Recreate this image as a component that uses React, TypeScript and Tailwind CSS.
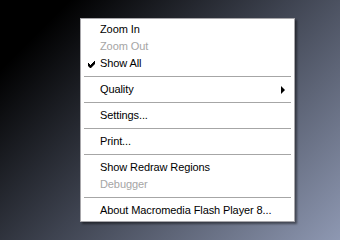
type Item = { label: string; disabled?: boolean; checked?: boolean; submenu?: boolean } | 'sep';

const items: Item[] = [
  { label: 'Zoom In' },
  { label: 'Zoom Out', disabled: true },
  { label: 'Show All', checked: true },
  'sep',
  { label: 'Quality', submenu: true },
  'sep',
  { label: 'Settings...' },
  'sep',
  { label: 'Print...' },
  'sep',
  { label: 'Show Redraw Regions' },
  { label: 'Debugger', disabled: true },
  'sep',
  { label: 'About Macromedia Flash Player 8...' },
];

export default function App() {
  return (
    <div className="w-[340px] h-[240px] overflow-hidden bg-[linear-gradient(135deg,#000_12%,#3e4350_50%,#8e98b2_100%)] pt-[18px] pl-[80px]">
      <div className="w-[215px] bg-white border border-[#a7a6aa] py-[2px] shadow-[2px_2px_2px_rgba(0,0,0,0.45)] font-['Liberation_Sans',sans-serif] text-[11px] tracking-[-0.1px] text-black">
        {items.map((it, i) =>
          it === 'sep' ? (
            <div key={i} className="h-[9px] flex items-center px-[3px]">
              <div className="h-px w-full bg-[#a6a6a6]" />
            </div>
          ) : (
            <div key={i} className="h-[17px] flex items-center pl-[19px] pr-[8px] relative">
              {it.checked && (
                <svg width="7" height="7" viewBox="0 0 7 7" className="absolute left-[7px] top-[6px]">
                  <path d="M0 2h1v1h1v1h1V3h1V2h1V1h1V0h1v3L3 7H2L0 5z" fill="#000" />
                </svg>
              )}
              <span className={it.disabled ? 'text-[#a5a5a5]' : ''}>{it.label}</span>
              {it.submenu && (
                <span className="ml-auto mr-[1px] w-0 h-0 border-y-[4px] border-y-transparent border-l-[4px] border-l-black" />
              )}
            </div>
          )
        )}
      </div>
    </div>
  );
}
